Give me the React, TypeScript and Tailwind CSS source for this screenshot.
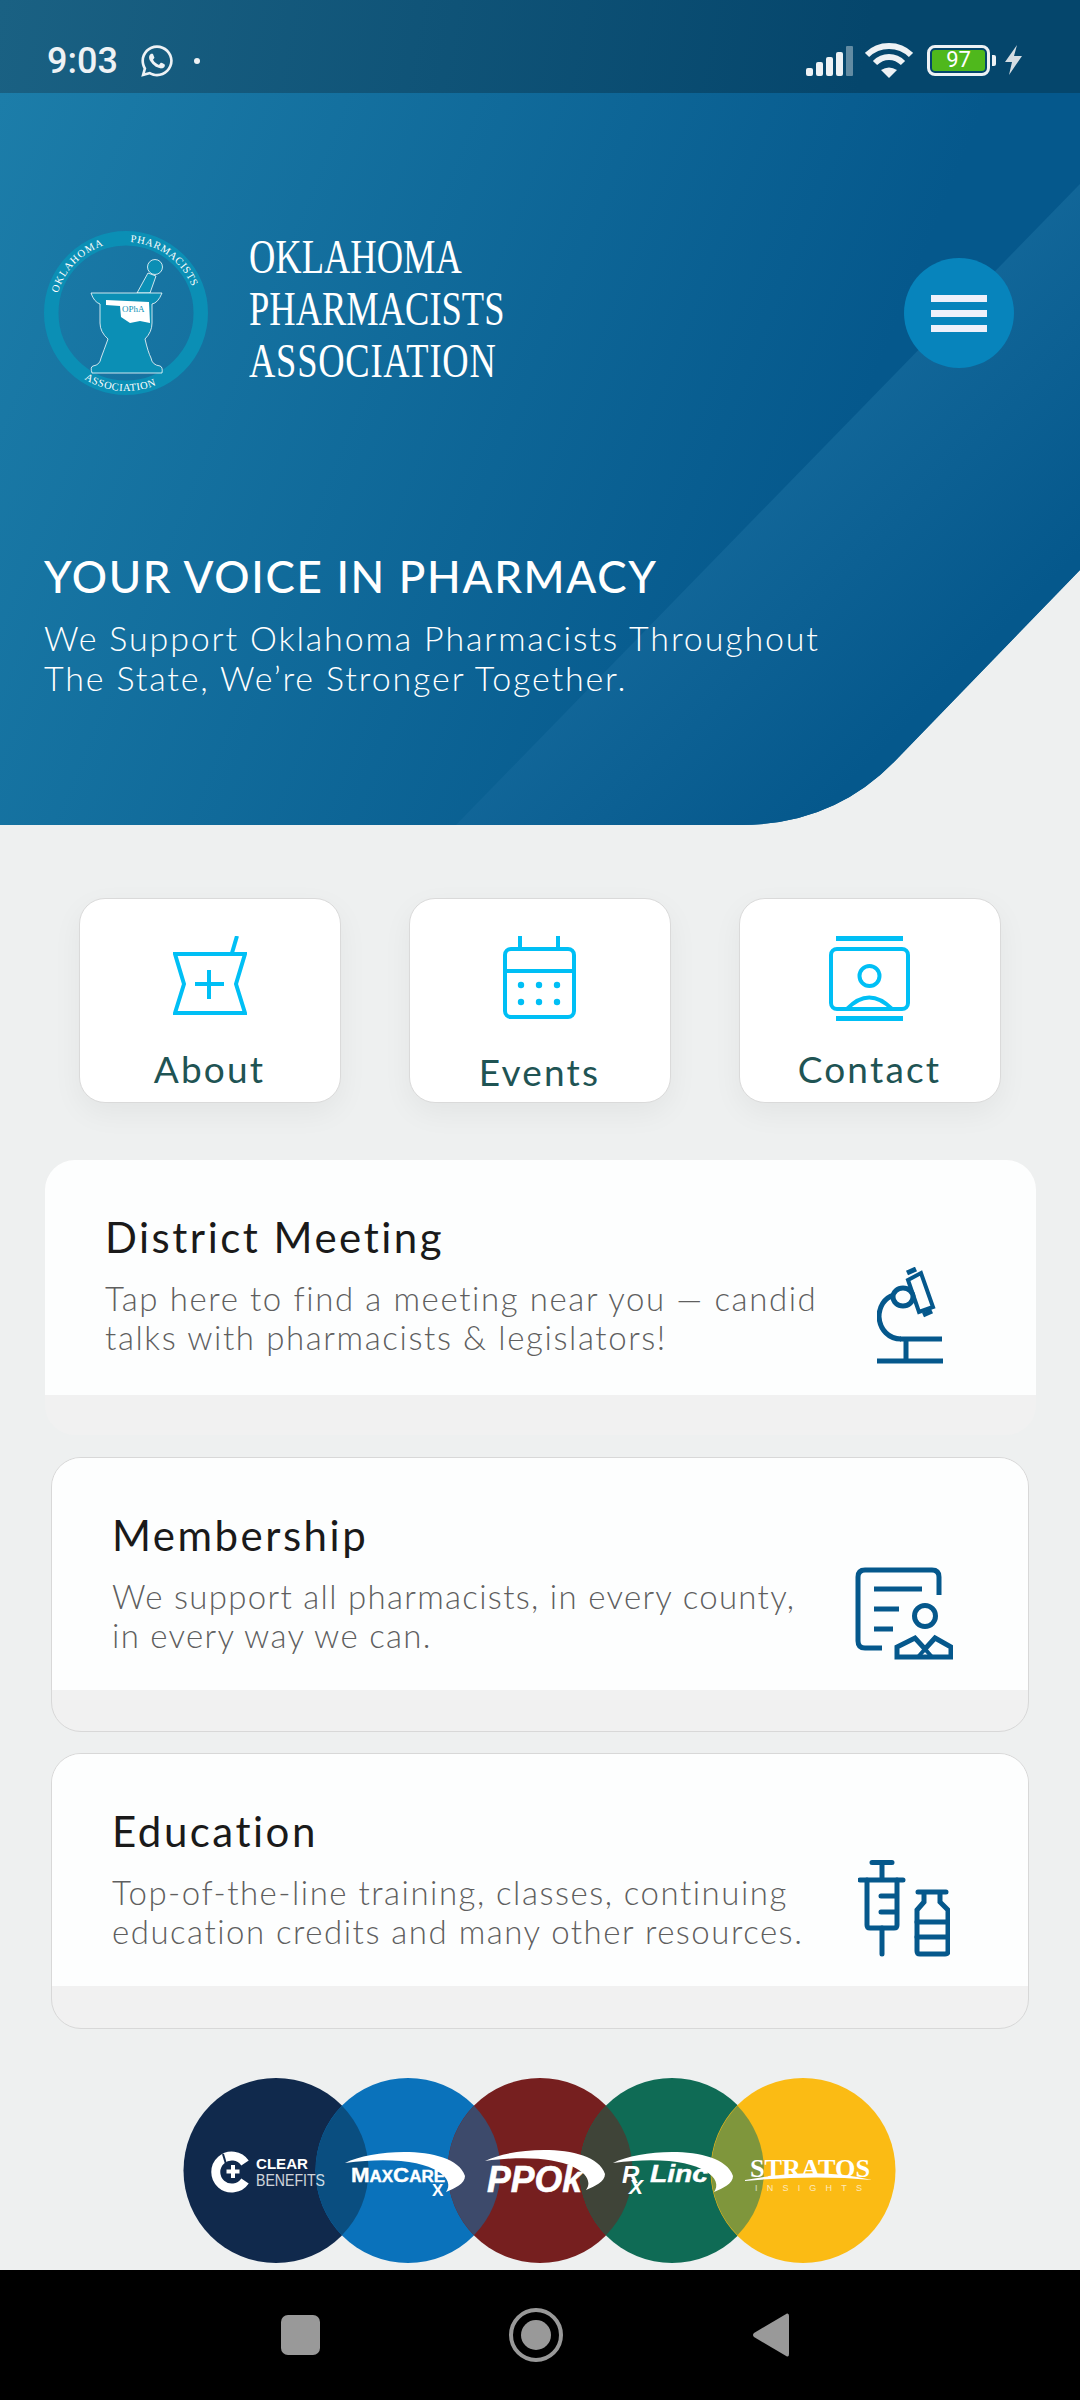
import { FaWhatsapp } from 'react-icons/fa'
import type { ReactNode } from 'react'

const sans = 'font-["Lato","Inter",sans-serif]'

function StatusBar() {
  return (
    <div className="flex h-[93px] items-start justify-between bg-[linear-gradient(100deg,#1a6183,#05466c_80%)] pl-[47px] pr-[58px] pt-[42px] text-[#eef2f5]">
      <div className="flex items-center">
        <span className="font-['Roboto',sans-serif] text-[36px] font-medium leading-[38px]">9:03</span>
        <FaWhatsapp className="ml-[21px] h-[36px] w-[36px]" />
        <span className="ml-[19px] h-[6px] w-[6px] rounded-full bg-[#eef2f5]" />
      </div>
      <div className="flex items-center">
        <svg width="48" height="32" viewBox="0 0 48 32" className="mt-[2px]">
          <rect x="0" y="23" width="7" height="8" rx="2" fill="#eef2f5" />
          <rect x="10" y="17" width="7" height="14" rx="2" fill="#eef2f5" />
          <rect x="20" y="12" width="7" height="19" rx="2" fill="#eef2f5" />
          <rect x="30" y="7" width="7" height="24" rx="2" fill="#eef2f5" />
          <rect x="40" y="1" width="7" height="30" rx="1" fill="#eef2f5" opacity="0.4" />
        </svg>
        <svg width="48" height="36" viewBox="0 0 48 36" className="ml-[11px]" fill="none" stroke="#eef2f5" strokeWidth="6">
          <path d="M2 13 C14 1 34 1 46 13" />
          <path d="M10 21 C18 13 30 13 38 21" />
          <path d="M24 36 L16 28 Q24 23 32 28 Z" fill="#eef2f5" stroke="none" />
        </svg>
        <div className="ml-[14px] flex h-[31px] w-[63px] items-center justify-center rounded-[8px] border-[3px] border-[#eef2f5] p-[2px]">
          <div className="flex h-full w-full items-center justify-center rounded-[3px] bg-[#4fb81c] font-['Roboto',sans-serif] text-[22px] leading-none text-white">97</div>
        </div>
        <span className="ml-[2px] h-[11px] w-[4px] rounded-r-[2px] bg-[#eef2f5]" />
        <svg width="18" height="30" viewBox="0 0 18 30" className="ml-[8px]" fill="#d5dde3">
          <path d="M13 0 L1 17 H8 L5 30 L18 11 H10 Z" />
        </svg>
      </div>
    </div>
  )
}

function OphaLogo() {
  return (
    <svg width="164" height="164" viewBox="44 231 164 164" className="shrink-0">
      <circle cx="126" cy="313" r="74.75" fill="none" stroke="#0b8fb5" strokeWidth="14.5" />
      <defs>
        <path id="logo-top" d="M55 313 A71 71 0 0 1 197 313" />
        <path id="logo-bottom" d="M48 313 A78 78 0 0 0 204 313" />
      </defs>
      <g fill="#fff" fontFamily="'Liberation Serif',serif" fontSize="10.5">
        <text letterSpacing="1"><textPath href="#logo-top" startOffset="9%">OKLAHOMA</textPath></text>
        <text letterSpacing="0.6"><textPath href="#logo-top" startOffset="52%">PHARMACISTS</textPath></text>
        <text letterSpacing="0.6"><textPath href="#logo-bottom" startOffset="32%">ASSOCIATION</textPath></text>
      </g>
      <g fill="#0b8fb5" stroke="#fff" strokeWidth="0.8">
        <path d="M137 293 L148 273 L156 276 L150 293 Z" />
        <circle cx="155" cy="267" r="7.5" />
        <path d="M91 293 H162 Q158 303 152 304 L152 323 Q152 332 145 339 Q148 352 151 358 Q152 365 160 366 Q163 367 162 373 H92 Q90 367 93 366 Q100 365 101 358 Q104 350 108 339 Q100 332 100 323 V304 Q94 302 91 293 Z" />
      </g>
      <path d="M106 300 L149 302 L150 323 L140 321 L130 323 L121 317 L120 306 L106 305 Z" fill="#fff" />
      <text x="122" y="312" fontFamily="'Liberation Serif',serif" fontSize="9" fill="#0b8fb5">OPhA</text>
    </svg>
  )
}

function Hero() {
  return (
    <div className="relative h-[732px] bg-[linear-gradient(112deg,#1c7da9,#05588c_72%)] [clip-path:path('M0_0H1080V477L895_668Q833_732_740_732H0Z')]">
      <div className="absolute inset-0 bg-[linear-gradient(135deg,#14699b_60%,#05588c_85%)] [clip-path:polygon(1080px_91px,1080px_732px,456px_732px)]" />
      <div className="relative flex flex-col pl-[44px] pr-[66px] pt-[138px]">
        <div className="flex items-center justify-between">
          <div className="flex items-center">
            <OphaLogo />
            <div className="mb-[8px] ml-[41px] flex flex-col font-['Liberation_Serif',serif] text-[48px] leading-[52px] text-white">
              <span className="origin-left scale-x-[0.76] whitespace-nowrap">OKLAHOMA</span>
              <span className="origin-left scale-x-[0.76] whitespace-nowrap">PHARMACISTS</span>
              <span className="origin-left scale-x-[0.76] whitespace-nowrap tracking-[1px]">ASSOCIATION</span>
            </div>
          </div>
          <button className="flex h-[110px] w-[110px] flex-col items-center justify-center gap-[8px] rounded-full bg-[#0784bc]">
            <span className="h-[7px] w-[56px] bg-[#eef0fa]" />
            <span className="h-[7px] w-[56px] bg-[#eef0fa]" />
            <span className="h-[7px] w-[56px] bg-[#eef0fa]" />
          </button>
        </div>
        <h1 className={`${sans} mt-[154px] whitespace-nowrap text-[44px] font-medium leading-[54px] tracking-[1.7px] text-white`}>YOUR VOICE IN PHARMACY</h1>
        <p className={`${sans} mt-[15px] whitespace-nowrap text-[34px] font-light leading-[40px] tracking-[1.85px] text-white`}>
          We Support Oklahoma Pharmacists Throughout
          <br />
          The State, We’re Stronger Together.
        </p>
      </div>
    </div>
  )
}

const quickLinks = [
  {
    label: 'About',
    labelClass: 'mt-[25px]',
    icon: (
      <svg width="74" height="79" viewBox="0 0 74 79" fill="none" stroke="#00bff5" strokeWidth="4">
        <path d="M2 18 H72 L63 48 L72 77 H2 L11 48 Z" />
        <path d="M36 34 V63 M22 48 H51" />
        <path d="M64 0 L59 17" />
      </svg>
    ),
  },
  {
    label: 'Events',
    labelClass: 'mt-[28px]',
    icon: (
      <svg width="73" height="83" viewBox="0 0 73 83" fill="none" stroke="#00bff5" strokeWidth="4">
        <rect x="2" y="13" width="69" height="68" rx="6" />
        <path d="M17 0 V13 M55 0 V13 M2 35 H71" />
        <g fill="#00bff5" stroke="none">
          <circle cx="18" cy="49" r="3.2" />
          <circle cx="36" cy="49" r="3.2" />
          <circle cx="54" cy="49" r="3.2" />
          <circle cx="18" cy="66" r="3.2" />
          <circle cx="36" cy="66" r="3.2" />
          <circle cx="54" cy="66" r="3.2" />
        </g>
      </svg>
    ),
  },
  {
    label: 'Contact',
    labelClass: 'mt-[25px]',
    icon: (
      <svg width="81" height="85" viewBox="0 0 81 85" fill="none" stroke="#00bff5" strokeWidth="4">
        <path d="M7 2.5 H74 M7 82.5 H74" strokeWidth="5" />
        <rect x="2" y="13" width="77" height="60" rx="6" />
        <circle cx="40.5" cy="40" r="10" />
        <path d="M18 73 Q40 50 63 73" />
      </svg>
    ),
  },
]

function QuickLinks() {
  return (
    <div className="mt-[73px] flex justify-center gap-[68px] pr-[1px]">
      {quickLinks.map((link) => (
        <div
          key={link.label}
          className="flex h-[205px] w-[262px] flex-col items-center rounded-[26px] border border-[#dadada] bg-white pt-[37px] shadow-[0_10px_30px_rgba(0,0,0,0.05)]"
        >
          <div className="flex h-[86px] items-start">{link.icon}</div>
          <span className={`${sans} ${link.labelClass} text-[37px] leading-[44px] tracking-[2.2px] text-[#1f5454]`}>{link.label}</span>
        </div>
      ))}
    </div>
  )
}

function InfoCard(props: { title: string; lines: string[]; icon: ReactNode; className: string; iconClass: string; whiteClass: string; descClass: string }) {
  return (
    <div className={`overflow-hidden rounded-[30px] bg-[#f1f1f1] ${props.className}`}>
      <div className={`flex justify-between bg-[#fdfefe] pl-[60px] ${props.whiteClass}`}>
        <div className={`${sans} pt-[53px]`}>
          <h2 className="whitespace-nowrap text-[42px] leading-[48px] tracking-[2.5px] text-[#1a1a1a]">{props.title}</h2>
          <p className={`mt-[18px] whitespace-nowrap text-[33px] font-light leading-[38.5px] text-[#5f5f5f] ${props.descClass}`}>
            {props.lines[0]}
            <br />
            {props.lines[1]}
          </p>
        </div>
        <div className={props.iconClass}>{props.icon}</div>
      </div>
    </div>
  )
}

const blue = '#05588c'

function Microscope() {
  return (
    <svg width="66" height="98" viewBox="0 0 66 98" fill="none" stroke={blue} strokeWidth="5">
      <path d="M0 94 H66 M23 72 H65 M29 72 V94" />
      <path d="M17 28 C7 31 2 40 2 50 C3 63 12 72 24 72" />
      <ellipse cx="26" cy="30" rx="10" ry="9" />
      <path d="M31 13 L44 6 L56 40 L42 45 Z" strokeWidth="4" />
      <path d="M30 6 L39 2 M46 48 L55 44" strokeWidth="5" />
    </svg>
  )
}

function Credential() {
  return (
    <svg width="98" height="93" viewBox="0 0 98 93" fill="none" stroke={blue} strokeWidth="5">
      <path d="M27 81 H10 Q3 81 3 74 V10 Q3 3 10 3 H77 Q84 3 84 10 V28" />
      <path d="M19 22 H67 M19 42 H44 M19 62 H38" />
      <circle cx="70" cy="49" r="10.5" />
      <path d="M42 90 V80 L60 71 L70 82 L80 71 L96 80 V90 Z" />
      <path d="M70 82 L63 90 M70 82 L77 90" strokeWidth="4" />
    </svg>
  )
}

function SyringeBottle() {
  return (
    <svg width="92" height="97" viewBox="0 0 92 97" fill="none" stroke={blue} strokeWidth="5" strokeLinecap="round">
      <path d="M14 2.5 H34 M24 2.5 V20 M2 20 H45" />
      <path d="M9 20 V65 Q9 68 12 68 H36 Q39 68 39 65 V20" />
      <path d="M23 36 H38 M23 52 H38 M24 68 V94" />
      <path d="M60 32 H88 M66 32 V42 L59 50 V91 Q59 94 62 94 H87 Q90 94 90 91 V50 L82 42 V32" />
      <path d="M59 62 H90 M59 77 H90" />
    </svg>
  )
}

function PartnerLogos() {
  const cy = 2170.5
  const r = 92.5
  const lens = (mid: number, fill: string) => (
    <path d={`M${mid} ${cy - 64.8} A${r} ${r} 0 0 1 ${mid} ${cy + 64.8} A${r} ${r} 0 0 1 ${mid} ${cy - 64.8} Z`} fill={fill} />
  )
  const swoosh = 'M345 2163 C375 2148 455 2145 465 2176 C465 2184 455 2188 446 2192 C458 2176 425 2152 345 2163 Z'
  return (
    <svg width="740" height="200" viewBox="170 2070 740 200" className="mx-auto block">
      <circle cx="276" cy={cy} r={r} fill="#10294c" />
      <circle cx="408" cy={cy} r={r} fill="#0a72bb" />
      <circle cx="540" cy={cy} r={r} fill="#761f1f" />
      <circle cx="672" cy={cy} r={r} fill="#0f6b55" />
      <circle cx="803" cy={cy} r={r} fill="#fbbb14" />
      {lens(342, '#0a4e80')}
      {lens(474, '#3d4a6b')}
      {lens(606, '#3f4438')}
      {lens(737.5, '#7f963c')}

      <g fill="#fff" fontFamily="'Liberation Sans',sans-serif">
        <path d="M245 2163 A16 16 0 1 0 245 2181" fill="none" stroke="#fff" strokeWidth="9" />
        <path d="M223 2154 L226 2164" fill="none" stroke="#10294c" strokeWidth="2" />
        <path d="M233 2165 V2178 M226.5 2171.5 H239.5" fill="none" stroke="#fff" strokeWidth="4" />
        <text x="256" y="2169" fontSize="15.5" fontWeight="700" textLength="52" lengthAdjust="spacingAndGlyphs">CLEAR</text>
        <text x="256" y="2186" fontSize="17" opacity="0.8" textLength="69" lengthAdjust="spacingAndGlyphs">BENEFITS</text>

        <path d={swoosh} />
        <text x="351" y="2182" fontWeight="700" textLength="94" lengthAdjust="spacingAndGlyphs" fontSize="16" stroke="#fff" strokeWidth="0.4">
          <tspan fontSize="21">M</tspan>AX<tspan fontSize="21">C</tspan>ARE
        </text>
        <text x="432" y="2196" fontSize="17" fontWeight="700">X</text>

        <path d={swoosh} transform="translate(140 -2)" />
        <text x="487" y="2192" fontSize="37" fontWeight="700" fontStyle="italic" textLength="95" lengthAdjust="spacingAndGlyphs" stroke="#fff" strokeWidth="0.6">PPOk</text>

        <path d={swoosh} transform="translate(268 0)" />
        <text x="622" y="2183" fontSize="24" fontWeight="700" fontStyle="italic">R</text>
        <text x="629" y="2194" fontSize="21" fontWeight="700" fontStyle="italic">X</text>
        <text x="650" y="2182" fontSize="23" fontWeight="700" fontStyle="italic" textLength="58" lengthAdjust="spacingAndGlyphs" stroke="#fff" strokeWidth="0.4">Linc</text>

        <text x="750" y="2177" fontSize="26" fontWeight="700" fontFamily="'Liberation Serif',serif" textLength="120" lengthAdjust="spacingAndGlyphs">STRATOS</text>
        <path d="M745 2180 C790 2172 830 2170 872 2180 C830 2176 790 2177 745 2181 Z" />
        <text x="755" y="2191" fontSize="9" opacity="0.7" textLength="107">INSIGHTS</text>
      </g>
    </svg>
  )
}

function NavBar() {
  return (
    <div className="flex h-[130px] items-center bg-black pl-[281px]">
      <div className="h-[40px] w-[39px] rounded-[7px] bg-[#999]" />
      <div className="ml-[189px] flex h-[54px] w-[54px] items-center justify-center rounded-full border-[4px] border-[#999]">
        <div className="h-[30px] w-[30px] rounded-full bg-[#999]" />
      </div>
      <svg width="37" height="46" viewBox="0 0 37 46" className="ml-[189px]">
        <path d="M35 1.5 Q37 1 37 4 V42 Q37 45 35 44.5 L2 25 Q0 23 2 21 Z" fill="#999" />
      </svg>
    </div>
  )
}

export default function App() {
  return (
    <div className="flex h-[2400px] w-[1080px] flex-col overflow-hidden bg-[#eef0f0]">
      <StatusBar />
      <Hero />
      <QuickLinks />
      <InfoCard
        title="District Meeting"
        lines={['Tap here to find a meeting near you — candid', 'talks with pharmacists & legislators!']}
        icon={<Microscope />}
        className="ml-[45px] mr-[44px] mt-[57px] h-[275px]"
        whiteClass="h-[235px]"
        iconClass="mr-[93px] mt-[107px]"
        descClass="tracking-[1.6px]"
      />
      <InfoCard
        title="Membership"
        lines={['We support all pharmacists, in every county,', 'in every way we can.']}
        icon={<Credential />}
        className="ml-[51px] mr-[51px] mt-[22px] h-[275px] border border-[#d8d8d8]"
        whiteClass="h-[232px]"
        iconClass="mr-[75px] mt-[109px]"
        descClass="tracking-[1.3px]"
      />
      <InfoCard
        title="Education"
        lines={['Top-of-the-line training, classes, continuing', 'education credits and many other resources.']}
        icon={<SyringeBottle />}
        className="ml-[51px] mr-[51px] mt-[21px] h-[276px] border border-[#d8d8d8]"
        whiteClass="h-[232px]"
        iconClass="mr-[78px] mt-[106px]"
        descClass="tracking-[1.5px]"
      />
      <div className="mt-[41px]">
        <PartnerLogos />
      </div>
      <NavBar />
    </div>
  )
}
